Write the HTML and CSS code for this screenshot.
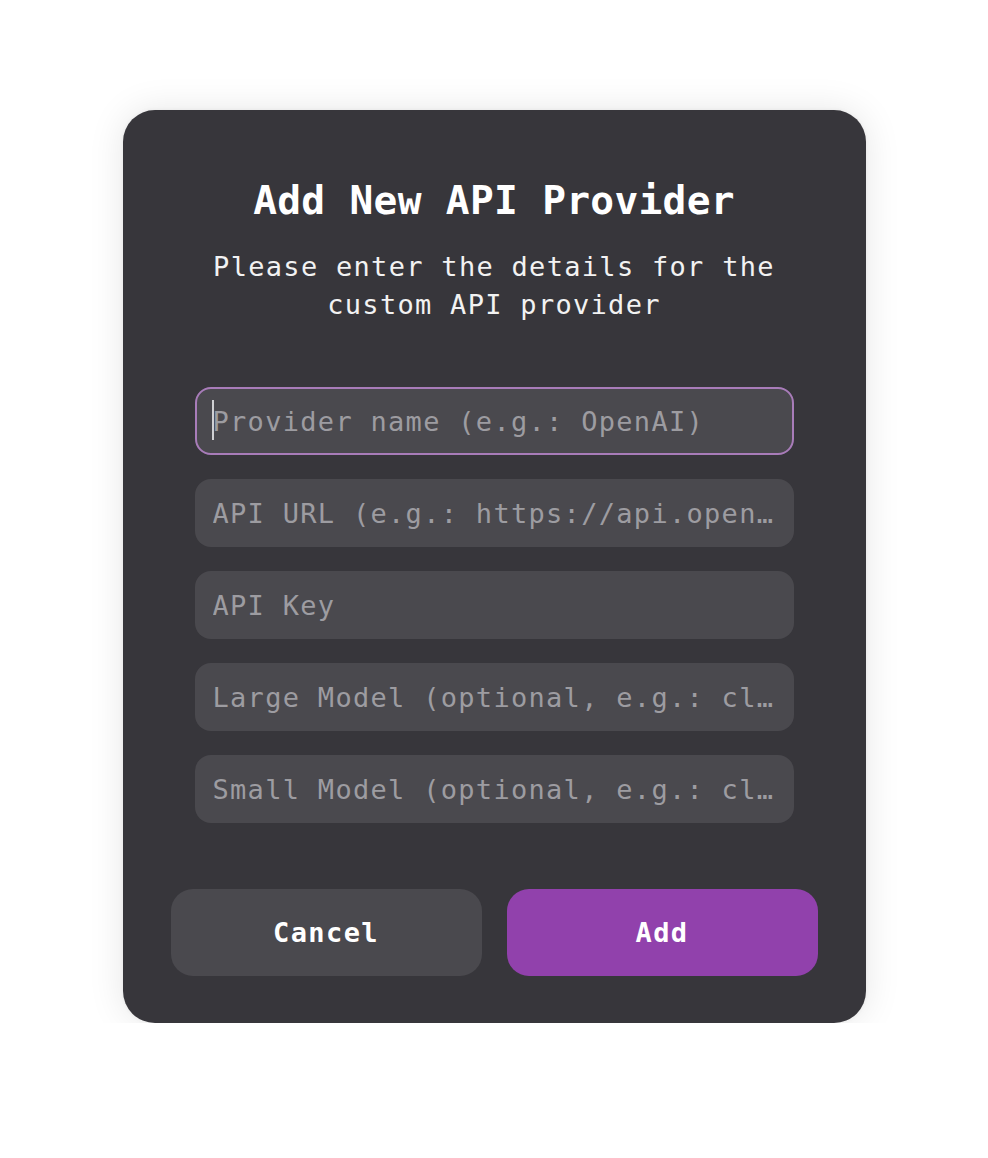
FILE: index.html
```html
<!DOCTYPE html>
<html lang="en">
<head>
<meta charset="utf-8">
<title>Add New API Provider</title>
<link rel="stylesheet" href="styles.css">
</head>
<body>
<div class="page">
  <div class="dialog" role="dialog" aria-labelledby="dlg-title">
    <h1 class="dialog-title" id="dlg-title">Add New API Provider</h1>
    <p class="dialog-subtitle">Please enter the details for the custom API provider</p>
    <form class="fields">
      <div class="field field-focused">
        <span class="caret"></span>
        <input class="field-input" type="text" placeholder="Provider name (e.g.: OpenAI)">
      </div>
      <div class="field">
        <input class="field-input" type="text" placeholder="API URL (e.g.: https://api.openai.com/v1)">
      </div>
      <div class="field">
        <input class="field-input" type="password" placeholder="API Key">
      </div>
      <div class="field">
        <input class="field-input" type="text" placeholder="Large Model (optional, e.g.: claude-3-opus)">
      </div>
      <div class="field">
        <input class="field-input" type="text" placeholder="Small Model (optional, e.g.: claude-3-haiku)">
      </div>
    </form>
    <div class="actions">
      <button class="btn btn-secondary" type="button">Cancel</button>
      <button class="btn btn-primary" type="button">Add</button>
    </div>
  </div>
</div>
</body>
</html>
```
FILE: styles.css
```css
* { box-sizing: border-box; }

html, body {
  margin: 0;
  padding: 0;
  background: #ffffff;
}

body {
  font-family: "DejaVu Sans Mono", "Liberation Mono", monospace;
}

.page {
  display: flex;
  justify-content: center;
  padding-top: 110px;
}

.dialog {
  width: 743px;
  height: 913px;
  background: #37363b;
  border-radius: 32px;
  box-shadow: 0 0 36px rgba(0, 0, 0, 0.10), 0 0 4px rgba(0, 0, 0, 0.06);
  padding: 66px 48px 48px;
  display: flex;
  flex-direction: column;
  align-items: center;
}

.dialog-title {
  margin: 0;
  font-size: 39.5px;
  line-height: 48px;
  font-weight: 700;
  letter-spacing: 0.3px;
  color: #ffffff;
  text-align: center;
}

.dialog-subtitle {
  margin: 24px 0 0;
  width: 600px;
  font-size: 27px;
  line-height: 38px;
  letter-spacing: 1.3px;
  color: #f2f2f2;
  text-align: center;
}

.fields {
  margin-top: 63px;
  width: 599px;
  display: flex;
  flex-direction: column;
  gap: 24px;
}

.field {
  position: relative;
  height: 68px;
  border-radius: 16px;
  background: #4a494e;
  border: 2px solid transparent;
}

.field-focused {
  border-color: #a87cb9;
}

.field-input {
  width: 100%;
  height: 100%;
  border: 0;
  outline: none;
  background: transparent;
  padding: 0 16px;
  font-family: inherit;
  font-size: 27px;
  letter-spacing: 1.3px;
  color: #f2f2f2;
  text-overflow: ellipsis;
  caret-color: transparent;
}

.field-input::placeholder {
  color: #9d9ca1;
  opacity: 1;
}

.caret {
  position: absolute;
  left: 15px;
  top: 11px;
  width: 2px;
  height: 40px;
  background: #d0d0d3;
}

.actions {
  margin-top: 66px;
  width: 100%;
  display: flex;
  gap: 25px;
}

.btn {
  flex: 1;
  height: 87px;
  border: 0;
  border-radius: 22px;
  font-family: inherit;
  font-size: 27px;
  font-weight: 700;
  letter-spacing: 1.4px;
  color: #ffffff;
}

.btn-secondary {
  background: #4a494e;
}

.btn-primary {
  background: #9141ac;
}
```
